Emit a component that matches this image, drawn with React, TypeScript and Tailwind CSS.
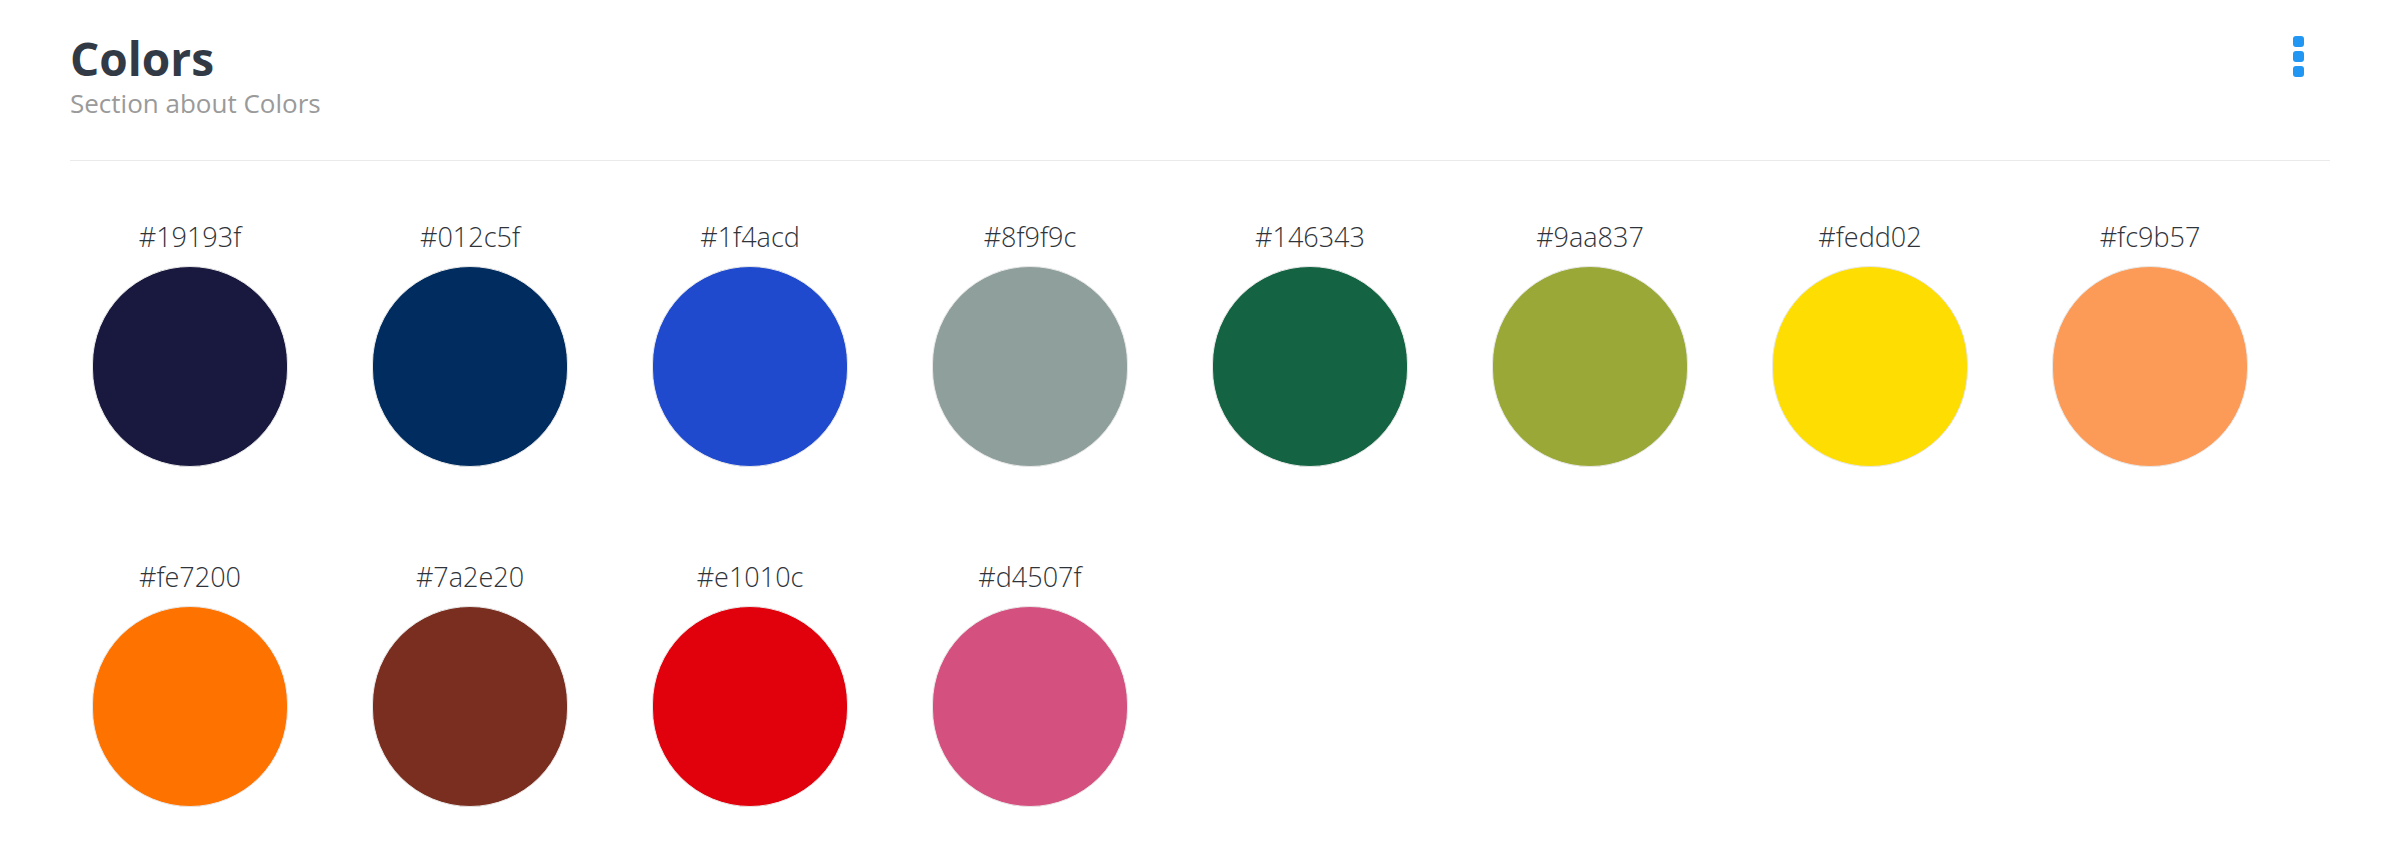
import React from "react";

const colors = [
  "#19193f",
  "#012c5f",
  "#1f4acd",
  "#8f9f9c",
  "#146343",
  "#9aa837",
  "#fedd02",
  "#fc9b57",
  "#fe7200",
  "#7a2e20",
  "#e1010c",
  "#d4507f",
];

function Swatch({ hex }: { hex: string }) {
  return (
    <div className="flex w-[196px] flex-col items-center">
      <div className="mb-[16px] whitespace-nowrap text-[27px] leading-none font-light text-[#2f343a]">
        {hex}
      </div>
      <div
        className="h-[201px] w-[196px] rounded-full border border-[#e8e8e8]"
        style={{ backgroundColor: hex }}
      />
    </div>
  );
}

export default function App() {
  return (
    <div
      className="min-h-[862px] w-full bg-white pl-[70px] pr-[59px]"
      style={{ fontFamily: '"Open Sans", "Noto Sans", sans-serif' }}
    >
      <div className="flex items-start justify-between pt-[35px]">
        <div className="flex flex-col">
          <h1 className="text-[46px] leading-none font-bold text-[#323a46]">Colors</h1>
          <p className="mt-[9px] text-[26px] leading-none text-[#9a9a9a]">Section about Colors</p>
        </div>
        <div className="mr-[26px] mt-[1px] flex flex-col gap-[4px]">
          <span className="block h-[11px] w-[11px] rounded-[3px] bg-[#2196f3]" />
          <span className="block h-[11px] w-[11px] rounded-[3px] bg-[#2196f3]" />
          <span className="block h-[11px] w-[11px] rounded-[3px] bg-[#2196f3]" />
        </div>
      </div>
      <div className="mt-[44px] h-px w-full bg-[#eaeaea]" />
      <div className="mt-[62px] flex flex-wrap gap-x-[84px] gap-y-[96px] pl-[22px]">
        {colors.map((c) => (
          <Swatch key={c} hex={c} />
        ))}
      </div>
    </div>
  );
}
